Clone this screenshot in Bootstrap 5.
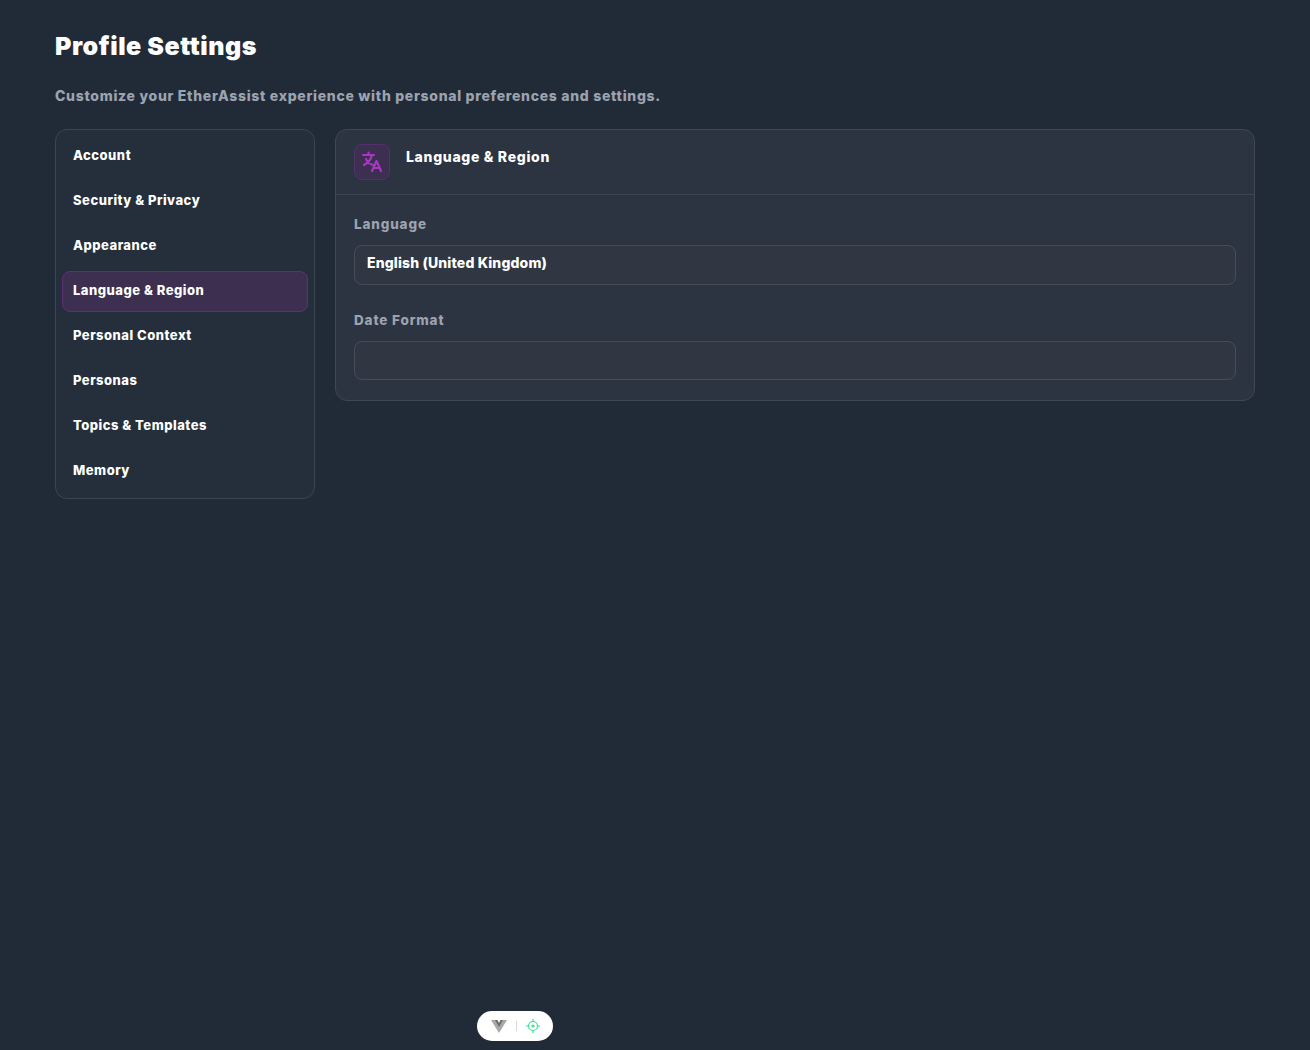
<!DOCTYPE html>
<html lang="en">
<head>
  <meta charset="UTF-8" />
  <meta name="viewport" content="width=device-width, initial-scale=1.0"/>
  <title>Profile Settings</title>
  <link href="https://cdn.jsdelivr.net/npm/bootstrap@5.3.3/dist/css/bootstrap.min.css" rel="stylesheet"/>
  <script src="https://cdn.jsdelivr.net/npm/bootstrap@5.3.3/dist/js/bootstrap.bundle.min.js"></script>
  <style>
    html, body { height: 100%; }
    body { background: #212b38; font-family: Inter, "Liberation Sans", sans-serif; font-weight: 800; color: #fff; overflow: hidden; }
    .page-wrap { padding: 30px 55px 0; }
    .page-title { font-size: 25px; line-height: 32px; font-weight: 900; margin: 0; letter-spacing: .55px; }
    .page-sub { font-size: 14px; line-height: 21px; color: #9ca3af; margin: 23px 0 23px; letter-spacing: .7px; }
    .split-row { gap: 20px; }
    .side-box { width: 260px; height: 370px; flex: none; background: #252f3c; border: 1px solid #3c4553; border-radius: 12px; padding: 6px; }
    .side-item { display: block; height: 41px; margin-bottom: 4px; padding: 0 10px; line-height: 37px; font-size: 13px; color: #fff; text-decoration: none; border: 1px solid transparent; border-radius: 8px; letter-spacing: .5px; }
    .side-item.picked { background: #3c2f4f; border-color: #5b3272; }
    .main-box { background: #2c3341; border: 1px solid #3f4755; border-radius: 12px; height: 272px; }
    .main-head { height: 65px; padding: 14px 18px; border-bottom: 1px solid #3c4351; }
    .head-icon { width: 36px; height: 36px; background: #3d2f50; border: 1px solid #53316b; border-radius: 8px; }
    .head-title { font-size: 14px; line-height: 26px; margin-left: 16px; letter-spacing: .7px; }
    .main-body { padding: 19px 18px; }
    .field-label { display: block; font-size: 13.5px; line-height: 20px; color: #9ca3af; margin-bottom: 11px; letter-spacing: .85px; }
    .field-box { height: 40px; background: #303642; border: 1px solid #464d5a; border-radius: 8px; padding: 0 12px; line-height: 34px; font-size: 14px; margin-bottom: 25px; letter-spacing: .15px; }
    .field-box.short { height: 39px; margin-bottom: 0; }
    .dev-pill { position: fixed; left: 477px; top: 1011px; width: 76px; height: 30px; background: #fff; border-radius: 15px; gap: 9px; }
    .dev-sep { width: 1px; height: 10px; background: #d8d8d8; }
  </style>
</head>
<body>
  <div class="page-wrap">
    <h1 class="page-title">Profile Settings</h1>
    <p class="page-sub">Customize your EtherAssist experience with personal preferences and settings.</p>
    <div class="d-flex align-items-start split-row">
      <nav class="side-box">
        <a class="side-item" href="#">Account</a>
        <a class="side-item" href="#">Security &amp; Privacy</a>
        <a class="side-item" href="#">Appearance</a>
        <a class="side-item picked" href="#">Language &amp; Region</a>
        <a class="side-item" href="#">Personal Context</a>
        <a class="side-item" href="#">Personas</a>
        <a class="side-item" href="#">Topics &amp; Templates</a>
        <a class="side-item" href="#">Memory</a>
      </nav>
      <section class="main-box flex-grow-1">
        <div class="main-head d-flex align-items-start">
          <div class="head-icon d-flex align-items-center justify-content-center">
            <svg width="24" height="24" viewBox="0 0 24 24" fill="none" stroke="#a637c4" stroke-width="2.200" stroke-linecap="round" stroke-linejoin="round"><path d="M3 5h11M8.500 2.500V5M12 5c-1 4-4 8-8 10M6 9c1 3 4 5 7 6"/><path d="M12 21l4.500-10 4.500 10M13.500 18h6"/></svg>
          </div>
          <div class="head-title">Language &amp; Region</div>
        </div>
        <div class="main-body">
          <label class="field-label">Language</label>
          <div class="field-box">English (United Kingdom)</div>
          <label class="field-label">Date Format</label>
          <div class="field-box short"></div>
        </div>
      </section>
    </div>
  </div>
  <div class="dev-pill d-flex align-items-center justify-content-center">
    <svg width="16" height="14" viewBox="0 0 16 14"><path d="M0 1h5l3 5 3-5h5L8 14z" fill="#a8a8a8"/><path d="M4 1h2.500L8 4l1.500-3H12L8 8z" fill="#6e6e6e"/></svg>
    <span class="dev-sep"></span>
    <svg width="14" height="14" viewBox="0 0 14 14" fill="none" stroke="#3ddc97" stroke-width="1.200"><circle cx="7" cy="7" r="4.500"/><circle cx="7" cy="7" r="1" fill="#3ddc97"/><path d="M7 0v2.500M7 11.500V14M0 7h2.500M11.500 7H14"/></svg>
  </div>
</body>
</html>
